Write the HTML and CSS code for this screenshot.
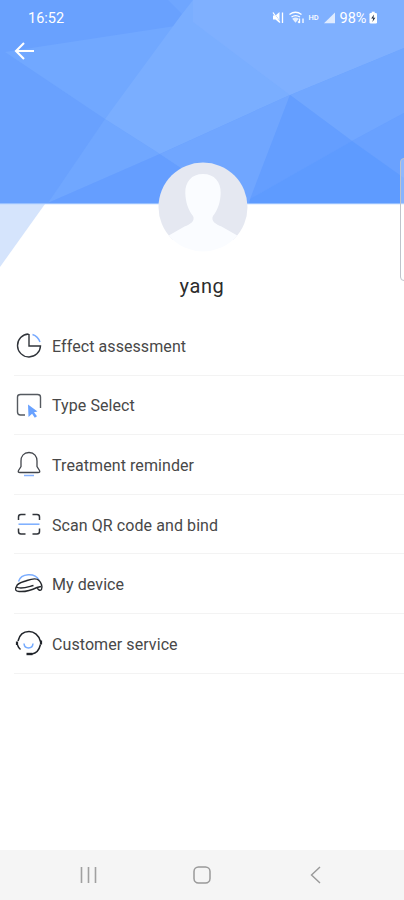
FILE: index.html
```html
<!DOCTYPE html>
<html lang="en">
<head>
<meta charset="utf-8">
<meta name="viewport" content="width=device-width, initial-scale=1">
<title>Profile</title>
<link rel="stylesheet" href="styles.css">
</head>
<body>
<div class="screen">
  <header class="hero">
    <svg class="facets" viewBox="0 0 404 270" width="404" height="270" aria-hidden="true">
      <path fill="#69a1fe" d="M0 0H404V204H0z"/>
      <path fill="#71a8ff" d="M5 52 182 25 105 119z"/>
      <path fill="#6fa6ff" d="M168 0H194L182 14z"/>
      <path fill="#70a7ff" d="M48 203 105 119 160 154z"/>
      <path fill="#7aaeff" d="M193 0H404V48L290 95 160 154 105 119 182 14z"/>
      <path fill="#7fb0ff" d="M193 0H404V48L290 95 193 22z"/>
      <path fill="#659eff" d="M48 203 160 154 235 204z"/>
      <path fill="#70a6ff" d="M160 154 290 95 249 204H235z"/>
      <path fill="#71a7ff" d="M290 95 404 48V113L352 141z"/>
      <path fill="#69a1ff" d="M352 141 404 113V178z"/>
      <path fill="#649eff" d="M290 95 352 141 250 199z"/>
      <path fill="#5e9bff" d="M249 204 250 199 352 141 404 178V204z"/>
      <path fill="#d5e4fc" d="M0 204H45L0 267z"/>
      <path fill="#a9cbff" d="M0 203.2H404V204.2H0z"/>
    </svg>
    <div class="status">
      <span class="time">16:52</span>
      <div class="indicators">
        <svg width="106" height="16" viewBox="272 10 106 16" aria-hidden="true">
          <g fill="#fff">
            <path d="M273 15.500h2.500l4-3.500v11l-4-3.500H273z"/>
            <path d="m295.500 22.800-3.300-4a5.500 5.500 0 0 1 6.600 0z" opacity=".8"/>
            <path d="M324 23.200 335 12.500v10.700z" opacity=".75"/>
            <rect x="369.500" y="13" width="7.500" height="10.500" rx="1.300"/>
            <path d="M371.700 11.700h3v2h-3z"/>
          </g>
          <path stroke="#7badfb" stroke-width="1" d="m273.500 12.500 7 10"/>
          <g fill="none" stroke="#fff" stroke-width="1.300">
            <path d="m273 12.500 7 10M282.500 12.500v10.500"/>
            <path d="M289.500 14.500q6-4.500 12 0M291.500 17q4-2.800 8.500 0M299.500 18.500v4.500m-1.500-1.500 1.500 1.500M303 23v-4.500"/>
          </g>
          <path d="m374 14.500-2.800 4h2l-.8 3.500 3-4.300h-2z" fill="#243047"/>
          <text x="308.500" y="20.300" class="network">HD</text>
          <text x="339.500" y="23.300" class="battery">98%</text>
        </svg>
      </div>
    </div>
    <svg class="back" width="22" height="20" viewBox="0 0 22 20" aria-label="Back">
      <path d="M10 2 2 10l8 8M2.500 10H20" fill="none" stroke="#fff" stroke-width="2.100"/>
    </svg>
    <div class="edge-handle"></div>
  </header>

  <section class="profile">
    <svg class="avatar" width="90" height="90" viewBox="0 0 90 90" aria-label="Avatar">
      <defs><clipPath id="disc"><circle cx="45" cy="45" r="44.500"/></clipPath></defs>
      <g clip-path="url(#disc)">
        <path fill="#e5e8f1" d="M0 0H90V78H0z"/>
        <path fill="#fafcff" d="M45 12C33.500 12 27 20 27.300 31c.2 9 3 17 7.700 23 2.500 5-3 8.500-8.500 10.500L9 74.500V90H81V74.500L63.500 64.500C58 62.500 52.500 59 55 54c4.700-6 7.500-14 7.700-23C63 20 56.500 12 45 12z"/>
      </g>
    </svg>
    <h1 class="name">yang</h1>
  </section>

  <nav class="menu">
    <a class="item">
      <svg class="icon" viewBox="0 0 30 30"><g fill="none" stroke="#30343a" stroke-width="1.400"><path d="M14.500 3A11.500 11.500 0 1 0 26.500 15H15V3"/><path d="M18.500 3.500A12 12 0 0 1 26 11" stroke="#78aaff"/></g></svg>
      <span>Effect assessment</span>
    </a>
    <a class="item">
      <svg class="icon" viewBox="0 0 30 30"><path d="M11 24H6.500Q3.500 24 3.500 21V6Q3.500 3.500 6.500 3.500H23.500Q26.500 3.500 26.500 6V17" fill="none" stroke="#555a60" stroke-width="1.400"/><path d="m14 13.500 9.500 7-3.500.8 3 4-2.200 1.400-2.700-4L14.500 26z" fill="#6aa2ff"/></svg>
      <span>Type Select</span>
    </a>
    <a class="item">
      <svg class="icon" viewBox="0 0 30 30"><path d="M15 2.500C9.500 2.500 7 6.500 7 11V16.500L4.500 20.500Q3.500 22.500 6 22.500H24Q26.500 22.500 25.500 20.500L23 16.500V11C23 6.500 20.500 2.500 15 2.500z" fill="none" stroke="#42464c" stroke-width="1.300"/><path d="M10 25.500H20" stroke="#85b1ff" stroke-width="1.500"/></svg>
      <span>Treatment reminder</span>
    </a>
    <a class="item">
      <svg class="icon" viewBox="0 0 30 30"><g fill="none" stroke="#30343a" stroke-width="1.500"><path d="M4.500 10V7Q4.500 4.500 7 4.500H11.500M18.500 4.500H23Q25.500 4.500 25.500 7V10M4.500 18.500V21.500Q4.500 24 7 24H11.500M18.500 24H23Q25.500 24 25.500 21.500V18.500"/><path d="M4.500 14.200H25.500" stroke="#7badff"/></g></svg>
      <span>Scan QR code and bind</span>
    </a>
    <a class="item">
      <svg class="icon" viewBox="0 0 30 30"><g fill="none" stroke="#25282d" stroke-width="1.400"><path d="M4.500 11.500C7 3 21 2.500 25 10" stroke="#7badff"/><path d="M2.500 16.500C3 13 8 12.300 13 10.500C18 8.700 23 8.200 25 10.500C27 12.500 29 17 27.500 19.500C26 21 24 20 23 17.500M2.500 16.500C.5 19.500 1.500 21.300 5 21.500C12 22 17 20.500 23 17.500L27 16.500M2.500 17C7 20 15 16.500 19.500 15.500"/></g></svg>
      <span>My device</span>
    </a>
    <a class="item">
      <svg class="icon" viewBox="0 0 30 30"><g fill="none" stroke="#20242a" stroke-width="1.500"><path d="M4 12C5.500 5.500 10 2.500 15 2.500S25 6 26.500 12.500"/><path d="M3 12.500V16M27 11.500V15.500" stroke-width="2.200"/><path d="M3.500 16Q4.500 19 6.500 20.500M26.500 15.500C25 21.500 22 24.500 18 25"/><path d="M12.500 25H18.500" stroke-width="2.400"/><path d="M10 14.500C10.500 20.500 18.500 20.500 19 14.500" stroke="#74aaff"/></g></svg>
      <span>Customer service</span>
    </a>
  </nav>

  <footer class="navbar">
    <svg width="22" height="22" viewBox="0 0 22 22"><path d="M3.500 3V19M10.500 3V19M17.500 3V19" stroke="#a0a0a0" stroke-width="1.600"/></svg>
    <svg width="22" height="22" viewBox="0 0 22 22"><rect x="3" y="3" width="16" height="16" rx="4.500" fill="none" stroke="#999" stroke-width="1.500"/></svg>
    <svg width="22" height="22" viewBox="0 0 22 22"><path d="m16 3-8.500 8 8.500 8" fill="none" stroke="#999" stroke-width="1.400"/></svg>
  </footer>
</div>
</body>
</html>
```

FILE: styles.css
```css
* {
  box-sizing: border-box;
}

body {
  margin: 0;
  background: #fff;
  font-family: Roboto, "Liberation Sans", sans-serif;
}

.screen {
  display: flex;
  flex-direction: column;
  width: 404px;
  height: 900px;
  overflow: hidden;
}

.hero {
  position: relative;
  flex: none;
  height: 162px;
}

.facets {
  position: absolute;
  top: 0;
  left: 0;
}

.status {
  position: relative;
  display: flex;
  justify-content: space-between;
  padding: 10px 26px 0 28px;
  height: 41px;
  color: #fff;
}

.time {
  font-size: 14.5px;
  line-height: 17px;
}

.indicators svg {
  display: block;
}

.network {
  font-size: 7.5px;
  font-weight: 500;
  fill: #fff;
}

.battery {
  font-size: 14.5px;
  fill: #fff;
}

.back {
  position: relative;
  display: block;
  margin-left: 14px;
}

.edge-handle {
  position: absolute;
  top: 158px;
  right: -4px;
  width: 8px;
  height: 123px;
  border: 1px solid #bfc3cb;
  border-radius: 5px;
  background: rgba(255, 255, 255, 0.25);
}

.profile {
  position: relative;
  display: flex;
  flex: none;
  flex-direction: column;
  align-items: center;
  height: 154px;
}

.avatar {
  display: block;
  margin-left: 2px;
}

.name {
  margin: 20px 0 0;
  color: #2c2c2c;
  font-size: 20px;
  font-weight: 400;
  line-height: 28px;
  letter-spacing: 0.6px;
}

.menu {
  display: flex;
  flex: 1;
  flex-direction: column;
  padding-left: 14px;
}

.item {
  display: flex;
  align-items: center;
  gap: 8px;
  height: 59.6px;
  padding-top: 2px;
  border-bottom: 1px solid #f3f3f3;
  color: #484848;
  font-size: 16px;
  letter-spacing: 0.08px;
}

.icon {
  flex: none;
  width: 30px;
  height: 30px;
}

.navbar {
  display: flex;
  flex: none;
  align-items: center;
  justify-content: space-between;
  height: 50px;
  padding: 0 78px;
  background: #f5f5f5;
}
```
